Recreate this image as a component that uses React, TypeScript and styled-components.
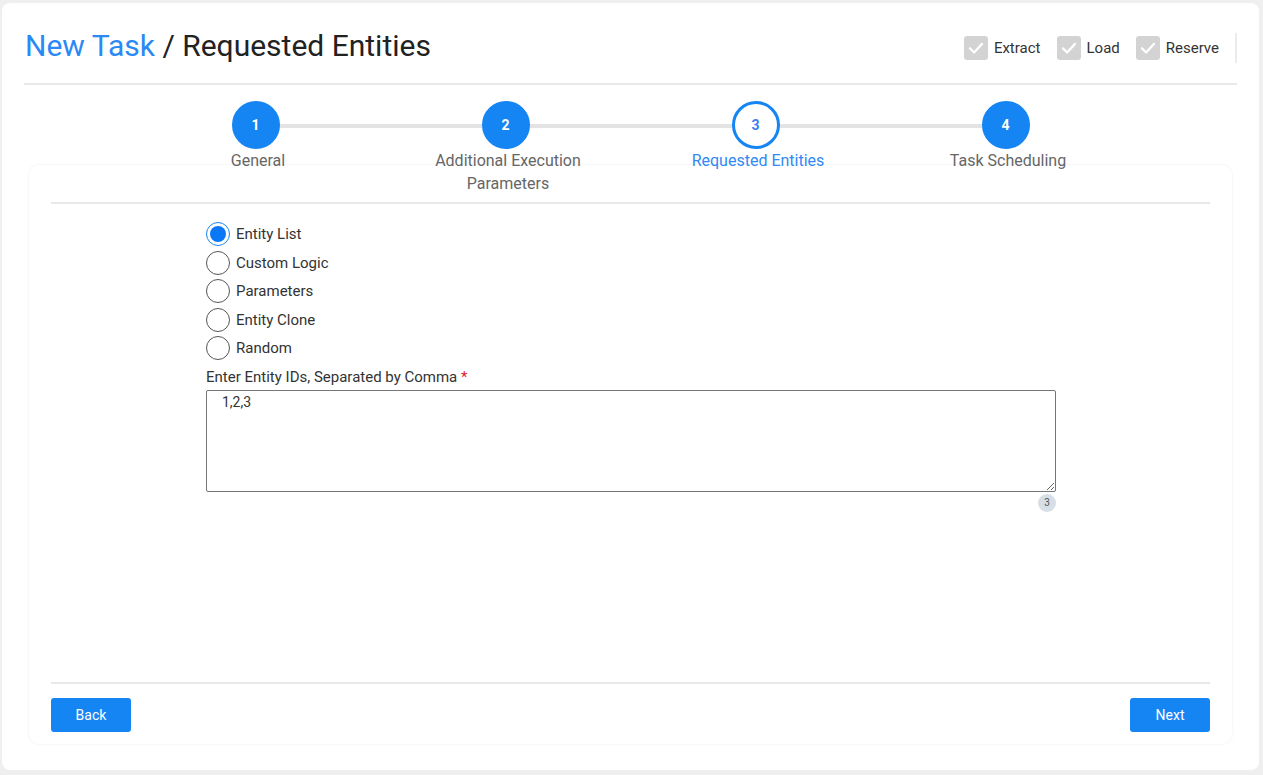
import React from "react";
import styled, { createGlobalStyle } from "styled-components";

const Global = createGlobalStyle`
  html, body { margin: 0; padding: 0; }
  body {
    background: #efefef;
    font-family: Roboto, "Noto Sans", Arial, sans-serif;
    color: #333;
  }
  * { box-sizing: border-box; }
`;

const BLUE = "#1685f4";

const Page = styled.div`
  padding: 3px 4px 5px 2px;
  height: 775px;
`;

const OuterCard = styled.div`
  background: #fff;
  border-radius: 8px;
  height: 767px;
  padding: 0 22px 26px 22px;
  display: flex;
  flex-direction: column;
`;

const Header = styled.div`
  display: flex;
  align-items: center;
  justify-content: space-between;
  padding: 23px 0 17px 1px;
  border-bottom: 2px solid #e9e9e9;
`;

const Title = styled.h1`
  margin: 0;
  font-size: 30px;
  line-height: 40px;
  font-weight: 400;
  color: #222;
`;

const TitleLink = styled.span`
  color: #2a89f4;
`;

const Modes = styled.div`
  display: flex;
  align-items: center;
  gap: 16px;
  margin-top: 4px;
`;

const ModeItem = styled.label`
  display: flex;
  align-items: center;
  gap: 6px;
  font-size: 15px;
  color: #333;
`;

const CheckBox = styled.span`
  width: 24px;
  height: 24px;
  border-radius: 3px;
  background: #d3d3d3;
  display: flex;
  align-items: center;
  justify-content: center;
`;

const VSep = styled.span`
  width: 2px;
  height: 30px;
  background: #ebebeb;
`;

const Stepper = styled.div`
  position: relative;
  z-index: 1;
  display: flex;
  justify-content: center;
  margin-top: 16px;
  margin-bottom: -30px;
  height: 94px;
`;

const Step = styled.div<{ $last?: boolean }>`
  position: relative;
  width: 250px;
  display: flex;
  flex-direction: column;
  align-items: center;
  &::after {
    content: "";
    display: ${(p) => (p.$last ? "none" : "block")};
    position: absolute;
    left: 50%;
    top: 23px;
    width: 100%;
    height: 4px;
    background: #e3e3e3;
    z-index: 0;
  }
`;

const Circle = styled.div<{ $active?: boolean }>`
  position: relative;
  z-index: 1;
  width: 48px;
  height: 48px;
  border-radius: 50%;
  background: ${(p) => (p.$active ? "#fff" : BLUE)};
  border: 3px solid ${BLUE};
  color: ${(p) => (p.$active ? "#3a7ff0" : "#fff")};
  font-weight: 700;
  font-size: 14px;
  display: flex;
  align-items: center;
  justify-content: center;
`;

const StepLabel = styled.div<{ $active?: boolean }>`
  max-width: 175px;
  padding-left: 5px;
  text-align: center;
  font-size: 16px;
  line-height: 23px;
  color: ${(p) => (p.$active ? "#2f8af5" : "#666")};
`;

const InnerCard = styled.div`
  flex: 1;
  background: #fff;
  border-radius: 10px;
  box-shadow: 0 0 3px rgba(0, 0, 0, 0.08);
  margin: 0 5px;
  padding: 37px 22px 12px 22px;
  display: flex;
  flex-direction: column;
`;

const Divider = styled.div`
  height: 2px;
  background: #e8e8e8;
`;

const Form = styled.div`
  width: 850px;
  margin-left: 155px;
  padding-top: 16px;
  flex: 1;
  display: flex;
  flex-direction: column;
`;

const RadioRow = styled.label`
  height: 28.5px;
  display: flex;
  align-items: center;
  gap: 6px;
  font-size: 15px;
  color: #333;
`;

const RadioCircle = styled.span<{ $checked?: boolean }>`
  width: 24px;
  height: 24px;
  border-radius: 50%;
  border: ${(p) => (p.$checked ? `1.5px solid ${BLUE}` : "1.5px solid #555")};
  display: flex;
  align-items: center;
  justify-content: center;
  &::after {
    content: "";
    display: ${(p) => (p.$checked ? "block" : "none")};
    width: 16px;
    height: 16px;
    border-radius: 50%;
    background: #0a78f5;
  }
`;

const FieldLabel = styled.div`
  margin-top: 4px;
  font-size: 15px;
  line-height: 20px;
  color: #333;
`;

const Required = styled.span`
  color: #e0202a;
`;

const TextArea = styled.textarea`
  margin-top: 3px;
  width: 850px;
  height: 102px;
  border: 1px solid #767676;
  border-radius: 2px;
  padding: 3px 15px;
  font-family: Roboto, Arial, sans-serif;
  font-size: 14px;
  line-height: 16px;
  color: #333;
  outline: none;
`;

const CounterRow = styled.div`
  display: flex;
  justify-content: flex-end;
  margin-top: 2px;
`;

const Counter = styled.span`
  width: 18px;
  height: 18px;
  border-radius: 50%;
  background: #d6dee6;
  color: #555;
  font-size: 10px;
  display: flex;
  align-items: center;
  justify-content: center;
`;

const Footer = styled.div`
  display: flex;
  justify-content: space-between;
  padding-top: 14px;
`;

const Button = styled.button`
  width: 80px;
  height: 34px;
  border: none;
  border-radius: 3px;
  background: ${BLUE};
  color: #fff;
  font-family: Roboto, Arial, sans-serif;
  font-size: 14px;
  cursor: pointer;
`;

const Check = () => (
  <svg width="18" height="18" viewBox="0 0 24 24" fill="none">
    <polyline points="4,12.5 9.5,18 20,6.5" stroke="#fff" strokeWidth="3" strokeLinecap="round" strokeLinejoin="round" />
  </svg>
);

const steps = [
  { n: 1, label: "General" },
  { n: 2, label: "Additional Execution Parameters" },
  { n: 3, label: "Requested Entities", active: true },
  { n: 4, label: "Task Scheduling" },
];

const options = ["Entity List", "Custom Logic", "Parameters", "Entity Clone", "Random"];

export default function App() {
  return (
    <Page>
      <Global />
      <OuterCard>
        <Header>
          <Title>
            <TitleLink>New Task</TitleLink> / Requested Entities
          </Title>
          <Modes>
            {["Extract", "Load", "Reserve"].map((m) => (
              <ModeItem key={m}>
                <CheckBox>
                  <Check />
                </CheckBox>
                {m}
              </ModeItem>
            ))}
            <VSep />
          </Modes>
        </Header>
        <Stepper>
          {steps.map((s, i) => (
            <Step key={s.n} $last={i === steps.length - 1}>
              <Circle $active={s.active}>{s.n}</Circle>
              <StepLabel $active={s.active}>{s.label}</StepLabel>
            </Step>
          ))}
        </Stepper>
        <InnerCard>
          <Divider />
          <Form>
            {options.map((o, i) => (
              <RadioRow key={o}>
                <RadioCircle $checked={i === 0} />
                {o}
              </RadioRow>
            ))}
            <FieldLabel>
              Enter Entity IDs, Separated by Comma <Required>*</Required>
            </FieldLabel>
            <TextArea defaultValue="1,2,3" />
            <CounterRow>
              <Counter>3</Counter>
            </CounterRow>
          </Form>
          <Divider />
          <Footer>
            <Button>Back</Button>
            <Button>Next</Button>
          </Footer>
        </InnerCard>
      </OuterCard>
    </Page>
  );
}
